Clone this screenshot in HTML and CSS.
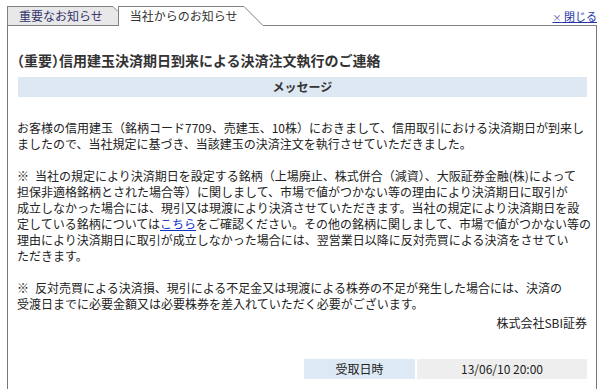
FILE: index.html
```html
<!DOCTYPE html>
<html lang="ja">
<head>
    <meta charset="UTF-8">
    <title>当社からのお知らせ</title>
    <link rel="stylesheet" href="styles.css">
</head>
<body>
    <div class="wrap">
        <div class="tabs">
            <a class="tab tab-off" href="#">重要なお知らせ</a>
            <svg class="fold" width="5" height="20" viewBox="0 0 5 20">
                <polygon points="0,1 5,6 5,19 0,19" fill="#e8e8e8"/>
                <line x1="0" y1="0.5" x2="5" y2="5.5" stroke="#808080" stroke-width="1"/>
                <line x1="0" y1="19.5" x2="5" y2="19.5" stroke="#808080" stroke-width="1"/>
            </svg>
            <span class="tab tab-on">当社からのお知らせ</span>
            <svg class="slant" width="19" height="20" viewBox="0 0 19 20">
                <line x1="0" y1="0.5" x2="19" y2="19.5" stroke="#808080" stroke-width="1"/>
            </svg>
            <div class="tab-fill">
                <a class="close" href="#"><span class="x">×</span> 閉じる</a>
            </div>
        </div>

        <div class="box">
            <h1 class="title">（重要）信用建玉決済期日到来による決済注文執行のご連絡</h1>
            <div class="bar">メッセージ</div>

            <p class="msg">お客様の信用建玉（銘柄コード7709、売建玉、10株）におきまして、信用取引における決済期日が到来し<br>ましたので、当社規定に基づき、当該建玉の決済注文を執行させていただきました。</p>

            <p class="msg">※&ensp;当社の規定により決済期日を設定する銘柄（上場廃止、株式併合（減資）、大阪証券金融(株)によって<br>担保非適格銘柄とされた場合等）に関しまして、市場で値がつかない等の理由により決済期日に取引が<br>成立しなかった場合には、現引又は現渡により決済させていただきます。当社の規定により決済期日を設<br>定している銘柄については<a href="#">こちら</a>をご確認ください。その他の銘柄に関しまして、市場で値がつかない等の<br>理由により決済期日に取引が成立しなかった場合には、翌営業日以降に反対売買による決済をさせてい<br>ただきます。</p>

            <p class="msg">※&ensp;反対売買による決済損、現引による不足金又は現渡による株券の不足が発生した場合には、決済の<br>受渡日までに必要金額又は必要株券を差入れていただく必要がございます。</p>

            <p class="sign">株式会社SBI証券</p>

            <div class="received">
                <div class="label">受取日時</div>
                <div class="value">13/06/10 20:00</div>
            </div>
        </div>
    </div>
</body>
</html>
```

FILE: styles.css
```css
html, body {
    margin: 0;
    padding: 0;
    height: 100%;
    overflow: hidden;
    background-color: #fff;
}

body {
    font-family: "Noto Sans CJK JP", "Noto Sans", sans-serif;
    font-size: 12px;
    color: #222;
}

.wrap {
    margin: 6px 0 0 7px;
    width: 590px;
}

.tabs {
    display: flex;
    height: 20px;
}

.tab {
    box-sizing: border-box;
    height: 20px;
    line-height: 18px;
    border-left: 1px solid #808080;
    border-top: 1px solid #808080;
    text-decoration: none;
    white-space: nowrap;
}

.tab-off {
    background-color: #e8e8e8;
    border-bottom: 1px solid #808080;
    color: #33336b;
    padding: 0 10px 0 11px;
}

.tab-on {
    background-color: #fff;
    color: #333;
    padding: 0 6px 0 11px;
}

.fold, .slant {
    display: block;
    flex-shrink: 0;
}

.tab-fill {
    flex: 1;
    box-sizing: border-box;
    height: 20px;
    border-bottom: 1px solid #808080;
    text-align: right;
}

.close {
    display: inline-block;
    font-size: 11px;
    line-height: 14px;
    margin-top: 3px;
    color: #2233aa;
    text-decoration: underline;
}

.close .x {
    font-size: 9px;
    color: #5544aa;
}

.box {
    box-sizing: border-box;
    height: 363px;
    border-left: 1px solid #777;
    border-right: 1px solid #777;
    padding: 24px 9px 0 9px;
}

.title {
    margin: 0 0 0 0;
    font-size: 14px;
    line-height: 20px;
    font-weight: bold;
    color: #333;
    font-feature-settings: "halt";
    white-space: nowrap;
}

.bar {
    margin: 7px 0 0 1px;
    height: 20px;
    line-height: 20px;
    background-color: #dde8f3;
    text-align: center;
    font-weight: bold;
    color: #333;
}

.msg {
    margin: 23px 0 0 0;
    line-height: 16px;
    white-space: nowrap;
}

.msg + .msg {
    margin-top: 16px;
}

.msg a {
    color: #1133cc;
    text-decoration: underline;
}

.sign {
    margin: 3px 0 0 0;
    line-height: 16px;
    text-align: right;
}

.received {
    display: flex;
    justify-content: flex-end;
    gap: 2px;
    margin-top: 28px;
}

.received .label,
.received .value {
    height: 20px;
    line-height: 20px;
    text-align: center;
}

.received .label {
    width: 111px;
    background-color: #dde9f4;
}

.received .value {
    width: 170px;
    background-color: #eeeeee;
}
```
